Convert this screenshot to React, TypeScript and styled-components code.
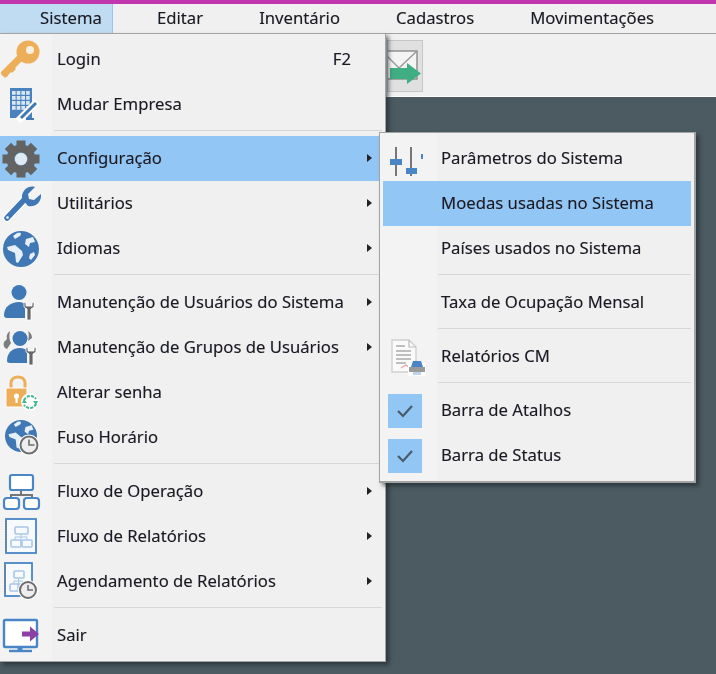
import React from "react";
import styled, { createGlobalStyle } from "styled-components";

const Global = createGlobalStyle`
  html, body { margin: 0; padding: 0; background: #4b5b61; }
  #root { width: 716px; height: 674px; overflow: hidden; }
`;

const Page = styled.div`
  position: relative;
  width: 716px;
  height: 674px;
  display: flex;
  flex-direction: column;
  overflow: hidden;
  font-family: "Noto Sans", "Open Sans", sans-serif;
  font-size: 16.7px;
  color: #1a1a22;
  filter: blur(0.4px);
  text-shadow: 0.4px 0 rgba(170, 90, 0, 0.22), -0.4px 0 rgba(0, 70, 190, 0.22);
`;
const TitleStrip = styled.div`
  height: 4px;
  background: #c236ad;
`;
const MenuBar = styled.div`
  height: 29px;
  display: flex;
  gap: 32px;
  background: #f0f0f0;
  border-bottom: 1px solid #a3a3a3;
`;
const MenuBarItem = styled.div<{ $active?: boolean }>`
  display: flex;
  align-items: center;
  padding: 0 12px 2px ${(p) => (p.$active ? "40px" : "12px")};
  width: ${(p) => (p.$active ? "113px" : "auto")};
  box-sizing: border-box;
  background: ${(p) => (p.$active ? "#bfdcf3" : "transparent")};
  border-right: ${(p) => (p.$active ? "1px solid #92c7f5" : "0")};
`;
const Toolbar = styled.div`
  height: 63px;
  display: flex;
  align-items: flex-start;
  padding: 6px 0 0 387px;
  box-sizing: border-box;
  background: #f0f0f0;
  border-bottom: 1px solid #fff;
`;
const ToolButton = styled.div`
  width: 36px;
  height: 52px;
  box-sizing: border-box;
  background: #e0e0e0;
  border: 1px solid #c6c6c6;
`;
const Workspace = styled.div`
  flex: 1;
  background: #4b5b61;
`;
const Menu = styled.div`
  position: absolute;
  left: 0;
  top: 33px;
  width: 386px;
  box-sizing: border-box;
  padding: 3px 0;
  background: linear-gradient(to right, #f3f3f3 52px, #f0f0f0 52px);
  border: 1px solid #a3a3a3;
  border-left: 0;
  box-shadow: 3px 3px 4px rgba(20, 30, 35, 0.55);
`;
const SubMenu = styled(Menu)`
  left: 379px;
  top: 132px;
  width: 317px;
  padding: 3px;
  background: linear-gradient(to right, #f3f3f3 57px, #f0f0f0 57px);
  border: 1px solid #a3a3a3;
  border-width: 1px 2px 2px 1px;
`;
const Row = styled.div<{ $hi?: boolean }>`
  height: 45px;
  display: flex;
  align-items: center;
  background: ${(p) => (p.$hi ? "#92c7f5" : "transparent")};
`;
const IconCell = styled.div`
  width: 57px;
  padding-left: 1px;
  box-sizing: border-box;
  display: flex;
  align-items: center;
  flex: none;
`;
const SubIconCell = styled(IconCell)`
  width: 58px;
  padding-left: 5px;
`;
const Label = styled.span`
  flex: 1;
  white-space: nowrap;
  padding-bottom: 3px;
`;
const Shortcut = styled.span`
  margin-right: 34px;
  padding-bottom: 3px;
`;
const Chevron = styled.span`
  width: 0;
  height: 0;
  margin-right: 13px;
  margin-bottom: 2px;
  border-left: 5px solid #222;
  border-top: 4px solid transparent;
  border-bottom: 4px solid transparent;
`;
const Separator = styled.div<{ $from: number; $to: number }>`
  height: 1px;
  margin: 3px ${(p) => p.$to}px 5px ${(p) => p.$from}px;
  background: #d7d7d7;
`;
const CheckBox = styled.div`
  width: 34px;
  height: 34px;
  display: flex;
  align-items: center;
  justify-content: center;
  background: #92c7f5;
`;

const B = "#3f78b5";
const Svg = ({ children }: { children: React.ReactNode }) => (
  <svg width="40" height="40" viewBox="0 0 40 40" fill="none">{children}</svg>
);

const KeyIcon = () => (
  <Svg>
    <path d="M4 33 L20 17" stroke="#edae5a" strokeWidth="7" strokeLinecap="square" />
    <path d="M6 37 l-4 -4 4 -4 3 3z M11 33 l-3 -3 4 -4 3 3z" fill="#edae5a" />
    <circle cx="27" cy="12" r="11.5" fill="#edae5a" />
    <circle cx="29" cy="10" r="4" fill="#f8efe2" />
  </Svg>
);
const BuildingIcon = () => (
  <Svg>
    <rect x="9" y="3" width="22" height="30" fill="#4a82bf" />
    {[0, 1, 2, 3].map((r) => [0, 1, 2, 3].map((c) => (
      <rect key={`${r}${c}`} x={11 + c * 4.7} y={6 + r * 5} width="3.6" height="3.8" fill="#d9e6f4" />
    )))}
    <path d="M17 36 L36 17" stroke="#fff" strokeWidth="7" />
    <path d="M20 33 L35 18" stroke={B} strokeWidth="3" />
    <path d="M25 34 h8" stroke={B} strokeWidth="2" />
  </Svg>
);
const GearIcon = () => (
  <Svg>
    {[0, 45, 90, 135, 180, 225, 270, 315].map((a) => (
      <rect key={a} x="15.5" y="1.5" width="9" height="8" fill="#636363" transform={`rotate(${a} 20 20)`} />
    ))}
    <circle cx="20" cy="20" r="10.5" stroke="#636363" strokeWidth="8" />
    <circle cx="20" cy="20" r="6" fill="#dfeaf4" />
  </Svg>
);
const WrenchIcon = () => (
  <Svg>
    <path d="M6 34 L23 16" stroke="#fff" strokeWidth="8" strokeLinecap="round" />
    <path d="M6 34 L23 16" stroke={B} strokeWidth="5.5" strokeLinecap="round" />
    <path d="M34 3 l-7 7 1 5 5 1 7 -6 c1 7 -5 14 -13 12 l-6 -7 c-1 -8 6 -14 13 -12z" fill={B} />
    <circle cx="6.5" cy="33.5" r="1.3" fill="#fff" />
  </Svg>
);
const GlobeIcon = ({ r = 18, cx = 20, cy = 20 }: { r?: number; cx?: number; cy?: number }) => (
  <g transform={`translate(${cx - 20 * (r / 18)} ${cy - 20 * (r / 18)}) scale(${r / 18})`}>
    <circle cx="20" cy="20" r="18" fill={B} />
    <path d="M16 4 c4 -1 5 0 3 3 l-5 3 -2 -3z M25 10 l7 -2 2 5 -5 1 -1 4 -4 -3z M6 18 l8 -2 7 6 1 4 -5 8 -2 -1 -1 -9 -7 -3z M29 25 l4 -2 1 3 -4 5 -2 -2z" fill="#e6eff8" />
  </g>
);
const Clock = ({ cx, cy, r }: { cx: number; cy: number; r: number }) => (
  <g>
    <circle cx={cx} cy={cy} r={r} fill="#eee" stroke="#fff" strokeWidth="4" />
    <circle cx={cx} cy={cy} r={r} fill="#eee" stroke="#6d6d6d" strokeWidth="2" />
    <path d={`M${cx} ${cy - r + 3} V${cy} H${cx + r - 3}`} stroke="#6d6d6d" strokeWidth="1.6" />
  </g>
);
const MiniWrench = ({ x, y }: { x: number; y: number }) => (
  <g transform={`translate(${x} ${y})`}>
    <path d="M0 0 v5 l3 2 v11 h4 v-11 l3 -2 v-5 l-2 1 v3 h-6 v-3z" fill="#666" stroke="#fff" strokeWidth="0.8" />
  </g>
);
const UserIcon = () => (
  <Svg>
    <circle cx="18" cy="9.5" r="7.5" fill={B} />
    <path d="M3 32 c0 -8 7 -13 15 -13 c3 0 5 1 6 2 v14 h-18 c-2 0 -3 -1 -3 -3z" fill={B} />
    <MiniWrench x={23} y={19} />
  </Svg>
);
const UsersIcon = () => (
  <Svg>
    <path d="M9 3 c-3 2 -4 5 -3 8 l-3 3 c-1 3 0 6 3 7 l4 -6 c-2 -3 -2 -8 -1 -12z M27 3 c3 2 4 4 4 7 l-4 3 c1 -4 1 -7 0 -10z" fill="#7d7d7d" />
    <circle cx="19" cy="10.5" r="7.5" fill={B} />
    <path d="M6 33 c0 -9 6 -13 13 -13 c3 0 5 1 7 2 v13 h-17 c-2 0 -3 -1 -3 -2z" fill={B} />
    <MiniWrench x={25} y={19} />
  </Svg>
);
const LockIcon = () => (
  <Svg>
    <path d="M10 15 v-5 c0 -8 14 -8 14 0 v5" stroke="#edae5a" strokeWidth="3" />
    <rect x="5" y="15" width="21" height="19" rx="1" fill="#edae5a" stroke="#fff" />
    <circle cx="15.5" cy="23" r="2.6" fill="#fff" />
    <rect x="14.5" y="24" width="2.2" height="6" fill="#fff" />
    <circle cx="29" cy="29" r="9" fill="#fff" />
    <path d="M23 27 a7 7 0 0 1 12 -1 M35 31 a7 7 0 0 1 -12 1" stroke="#3db98a" strokeWidth="2" strokeDasharray="3 1.2" />
    <path d="M21 30 l5 0 -3 -4z M37 28 l-5 0 3 4z" fill="#3db98a" />
  </Svg>
);
const TimeZoneIcon = () => (
  <Svg>
    <GlobeIcon r={16} cx={20} cy={18} />
    <Clock cx={28} cy={27} r={8.5} />
  </Svg>
);
const FlowIcon = () => (
  <Svg>
    <rect x="9" y="3" width="23" height="15" rx="2" fill="#fff" stroke="#4a86c5" strokeWidth="2.2" />
    <path d="M20 18 v5 M10 27 v-4 h21 v4" stroke="#777" strokeWidth="2" />
    <rect x="3" y="26" width="15" height="11" rx="3" fill="#fff" stroke="#4a86c5" strokeWidth="2.2" />
    <rect x="23" y="26" width="15" height="11" rx="3" fill="#fff" stroke="#4a86c5" strokeWidth="2.2" />
  </Svg>
);
const Notebook = ({ w, h, x, y }: { w: number; h: number; x: number; y: number }) => (
  <g>
    <rect x={x} y={y} width={w} height={h} fill="#f7fafd" stroke="#4a86c5" strokeWidth="1.8" />
    <path d={`M${x} ${y + 2} V${y + h - 2}`} stroke="#777" strokeWidth="2" strokeDasharray="1 1.6" />
    <rect x={x + 9} y={y + 8} width={w - 17} height="7" rx="1" stroke="#a9c6e5" strokeWidth="1.6" />
    <rect x={x + 5} y={y + 21} width="10" height="7" rx="1" stroke="#a9c6e5" strokeWidth="1.6" />
    <rect x={x + w - 14} y={y + 21} width="10" height="7" rx="1" stroke="#a9c6e5" strokeWidth="1.6" />
    <path d={`M${x + w / 2} ${y + 15} v6 M${x + 9} ${y + 21} v-3 h${w - 18} v3`} stroke="#a9c6e5" strokeWidth="1" />
  </g>
);
const ReportFlowIcon = () => (
  <Svg>
    <Notebook x={5} y={2} w={30} h={34} />
  </Svg>
);
const ScheduleIcon = () => (
  <Svg>
    <Notebook x={4} y={1} w={27} h={33} />
    <Clock cx={27} cy={28} r={8} />
  </Svg>
);
const ExitIcon = () => (
  <Svg>
    <rect x="3" y="4" width="33" height="27" rx="1" fill="#fff" stroke="#4a86c5" strokeWidth="2.4" />
    <path d="M19 31 v3" stroke="#4a86c5" strokeWidth="5" />
    <path d="M8 35 h23" stroke="#4a86c5" strokeWidth="2.4" />
    <path d="M21 15.5 h8 v-5 l9 7.5 -9 7.5 v-5 h-8z" fill="#8e3fa5" />
  </Svg>
);
const SlidersIcon = () => (
  <Svg>
    <path d="M8 8 v12 M8 26 v11 M23 8 v21 M23 35 v2" stroke="#777" strokeWidth="2" />
    <rect x="2" y="20" width="12" height="6" fill="#4a86c5" />
    <rect x="18" y="29" width="11" height="6" fill="#4a86c5" />
    <rect x="33" y="15" width="2" height="5" fill="#4a86c5" />
  </Svg>
);
const ReportIcon = () => (
  <Svg>
    <path d="M4 3 h17 l7 7 v25 h-24z" fill="#fafafa" stroke="#d0d0d0" strokeWidth="1.4" />
    <path d="M21 3 v7 h7" stroke="#bbb" strokeWidth="1.2" />
    <path d="M8 9 h9 M8 14 h15 M8 18 h15 M8 22 h15 M8 26 h10" stroke="#aaa" strokeWidth="1.4" />
    <path d="M13 31 l5 -3 4 3" stroke="#e6a3a3" strokeWidth="1.2" />
    <rect x="20" y="26" width="18" height="13" fill="#fff" />
    <path d="M25 24 h8 l2 6 h-12z" fill="#4a86c5" />
    <rect x="21" y="30" width="16" height="5" fill="#9a9a9a" />
    <rect x="25" y="35" width="8" height="3" fill="#bcd3ea" />
  </Svg>
);
const Check = () => (
  <svg width="18" height="14" viewBox="0 0 18 14" fill="none">
    <path d="M2 7 L7 12 L16 2" stroke="#4a5a68" strokeWidth="2.2" />
  </svg>
);
const EnvelopeArrow = () => (
  <svg width="34" height="50" viewBox="0 0 34 50" fill="none">
    <rect x="-6" y="10" width="35" height="28" fill="#f4f4f4" stroke="#8a8a8a" strokeWidth="1.4" />
    <path d="M-6 10 L11 27 L29 10" stroke="#9a9a9a" strokeWidth="1.4" />
    <path d="M2 27 h17 v-5 l14 10.5 -14 10.5 v-5 h-17z" fill="#3fae82" />
  </svg>
);

type Item = { label: string; icon: React.ReactNode; arrow?: boolean; hi?: boolean; key?: string };
const groups: Item[][] = [
  [
    { label: "Login", icon: <KeyIcon />, key: "F2" },
    { label: "Mudar Empresa", icon: <BuildingIcon /> },
  ],
  [
    { label: "Configuração", icon: <GearIcon />, arrow: true, hi: true },
    { label: "Utilitários", icon: <WrenchIcon />, arrow: true },
    { label: "Idiomas", icon: <Svg><GlobeIcon /></Svg>, arrow: true },
  ],
  [
    { label: "Manutenção de Usuários do Sistema", icon: <UserIcon />, arrow: true },
    { label: "Manutenção de Grupos de Usuários", icon: <UsersIcon />, arrow: true },
    { label: "Alterar senha", icon: <LockIcon /> },
    { label: "Fuso Horário", icon: <TimeZoneIcon /> },
  ],
  [
    { label: "Fluxo de Operação", icon: <FlowIcon />, arrow: true },
    { label: "Fluxo de Relatórios", icon: <ReportFlowIcon />, arrow: true },
    { label: "Agendamento de Relatórios", icon: <ScheduleIcon />, arrow: true },
  ],
  [{ label: "Sair", icon: <ExitIcon /> }],
];
const subGroups: Item[][] = [
  [
    { label: "Parâmetros do Sistema", icon: <SlidersIcon /> },
    { label: "Moedas usadas no Sistema", icon: null, hi: true },
    { label: "Países usados no Sistema", icon: null },
  ],
  [{ label: "Taxa de Ocupação Mensal", icon: null }],
  [{ label: "Relatórios CM", icon: <ReportIcon /> }],
  [
    { label: "Barra de Atalhos", icon: <CheckBox><Check /></CheckBox> },
    { label: "Barra de Status", icon: <CheckBox><Check /></CheckBox> },
  ],
];

export default function App() {
  return (
    <Page>
      <Global />
      <TitleStrip />
      <MenuBar>
        <MenuBarItem $active>Sistema</MenuBarItem>
        <MenuBarItem>Editar</MenuBarItem>
        <MenuBarItem>Inventário</MenuBarItem>
        <MenuBarItem>Cadastros</MenuBarItem>
        <MenuBarItem>Movimentações</MenuBarItem>
      </MenuBar>
      <Toolbar>
        <ToolButton><EnvelopeArrow /></ToolButton>
      </Toolbar>
      <Workspace />
      <Menu>
        {groups.map((g, i) => (
          <React.Fragment key={i}>
            {i > 0 && <Separator $from={54} $to={3} />}
            {g.map((it) => (
              <Row key={it.label} $hi={it.hi}>
                <IconCell>{it.icon}</IconCell>
                <Label>{it.label}</Label>
                {it.key && <Shortcut>{it.key}</Shortcut>}
                {it.arrow && <Chevron />}
              </Row>
            ))}
          </React.Fragment>
        ))}
      </Menu>
      <SubMenu>
        {subGroups.map((g, i) => (
          <React.Fragment key={i}>
            {i > 0 && <Separator $from={55} $to={0} />}
            {g.map((it) => (
              <Row key={it.label} $hi={it.hi}>
                <SubIconCell>{it.icon}</SubIconCell>
                <Label>{it.label}</Label>
              </Row>
            ))}
          </React.Fragment>
        ))}
      </SubMenu>
    </Page>
  );
}
